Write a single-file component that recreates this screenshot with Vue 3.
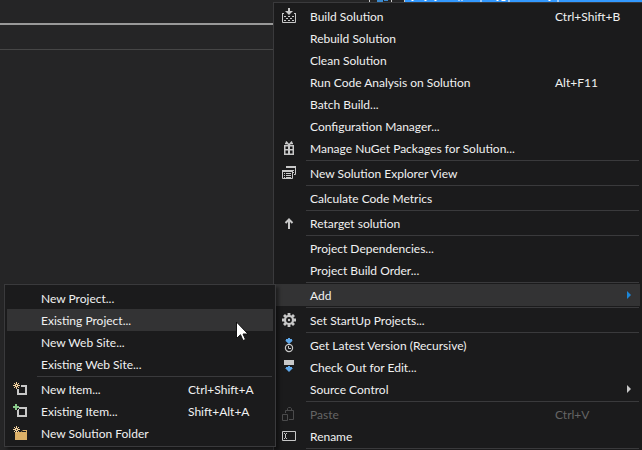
<script setup>
import { ref } from 'vue'

const hovered = ref('Existing Project...')

const groups = [
  [
    { label: 'Build Solution', icon: 'build', keys: 'Ctrl+Shift+B' },
    { label: 'Rebuild Solution' },
    { label: 'Clean Solution' },
    { label: 'Run Code Analysis on Solution', keys: 'Alt+F11' },
    { label: 'Batch Build...' },
    { label: 'Configuration Manager...' },
    { label: 'Manage NuGet Packages for Solution...', icon: 'nuget' }
  ],
  [{ label: 'New Solution Explorer View', icon: 'view' }],
  [{ label: 'Calculate Code Metrics' }],
  [{ label: 'Retarget solution', icon: 'up' }],
  [{ label: 'Project Dependencies...' }, { label: 'Project Build Order...' }],
  [{ label: 'Add', arrow: true, open: true }],
  [{ label: 'Set StartUp Projects...', icon: 'gear' }],
  [
    { label: 'Get Latest Version (Recursive)', icon: 'latest' },
    { label: 'Check Out for Edit...', icon: 'checkout' },
    { label: 'Source Control', arrow: true }
  ],
  [
    { label: 'Paste', icon: 'paste', keys: 'Ctrl+V', disabled: true },
    { label: 'Rename', icon: 'rename' }
  ]
]

const addGroups = [
  [
    { label: 'New Project...' },
    { label: 'Existing Project...' },
    { label: 'New Web Site...' },
    { label: 'Existing Web Site...' }
  ],
  [
    { label: 'New Item...', icon: 'newItem', keys: 'Ctrl+Shift+A' },
    { label: 'Existing Item...', icon: 'existingItem', keys: 'Shift+Alt+A' },
    { label: 'New Solution Folder', icon: 'folder' }
  ]
]

const star = '<path d="M3.5 0v7M0 3.5h7M1 1l5 5M6 1L1 6" stroke="#f0cf9c"/><path d="M3 3h1v1H3z" fill="#1b1b1c"/>'

const icons = {
  build: '<path d="M.5 4v9.500h13V4M0 4.500h2M12 4.500h2" fill="none" stroke="#c8c8c8"/><path d="M6 -1h2v3h3L7 6 3 2h3z" fill="#c8c8c8"/><path d="M2 7h2v1H2zM10 7h2v1h-2zM6 7h2v1H6zM4 9h2v1H4zM8 9h2v1H8zM2 11h2v1H2zM6 11h2v1H6zM10 11h2v1h-2z" fill="#c8c8c8"/>',
  nuget: '<path d="M2 4h10v5H2zM2 9h10v5H2z" fill="#c8c8c8"/><path d="M3.500 5.500H6V8H3.500zM8 5.500h2.500V8H8zM3.500 9.500H6v3H3.500zM8 9.500h2.500v3H8z" fill="#1b1b1c"/><path d="M7 4L4 0.500M7 4l3-3.500M3 2.500h3M8 2.500h3" fill="none" stroke="#c8c8c8" stroke-width="1.500"/>',
  view: '<path d="M4.500 2V.5h9v8H12M.5 4.500h10v8H.5z" fill="none" stroke="#c8c8c8"/><path d="M4 0h10v2H4zM0 4h11v2H0zM2 7h1v1H2zM4 7h5v1H4zM2 9h1v1H2zM4 9h5v1H4zM2 11h1v1H2zM4 11h5v1H4zM11 4h1v1h-1zM11 6h1v1h-1z" fill="#c8c8c8"/>',
  up: '<path d="M7 13V3M3.500 7L7 3.500 10.500 7" fill="none" stroke="#c8c8c8" stroke-width="2"/>',
  gear: '<g stroke="#c8c8c8" stroke-width="2.800"><path d="M7 0v3M7 11v3M0 7h3M11 7h3M2 2l2 2M10 10l2 2M2 12l2-2M10 4l2-2"/></g><circle cx="7" cy="7" r="4" fill="none" stroke="#c8c8c8" stroke-width="2.200"/><circle cx="7" cy="7" r="1.200" fill="#c8c8c8"/>',
  latest: '<path d="M6 0h2v2.500h3L7 6 3 2.500h3z" fill="#5fa8ea"/><path d="M4 1h2v2H4zM8 1h2v2H8z" fill="#5fa8ea"/><circle cx="7" cy="10" r="3.600" fill="none" stroke="#c8c8c8" stroke-width="1.200"/><path d="M6.500 8v2.500H9" fill="none" stroke="#c8c8c8"/>',
  checkout: '<path d="M2 0h10v5H2z" fill="#c8c8c8"/><path d="M6 6h2v2h3l-4 4-4-4h3z" fill="#5fa8ea"/><path d="M4 7h2v2H4zM8 7h2v2H8z" fill="#5fa8ea"/>',
  paste: '<path d="M.5 7.500h5v6h-5zM3.500 6V3.500h8v9H7M5.500 3V1.500l1-1h2l1 1V3" fill="none" stroke="#4b4b4c"/>',
  rename: '<path d="M.5 2.500h13v9H.5z" fill="none" stroke="#c8c8c8"/><path d="M2 4.500h1M4 4.500h1M3.500 5v4M2 9.500h1M4 9.500h1" stroke="#c8c8c8"/>',
  newItem: `<path d="M8 4h5v8H5V7" fill="none" stroke="#c8c8c8" stroke-width="2"/>${star}`,
  existingItem: '<path d="M5 4h8v8H5z" fill="none" stroke="#c8c8c8" stroke-width="2"/><path d="M3 0v6M0 3h6" stroke="#1b1b1c" stroke-width="4"/><path d="M3 0v6M0 3h6" stroke="#89c98b" stroke-width="2"/>',
  folder: `<path d="M2 6h6l2-2h4v10H2z" fill="#dcb067"/><path d="M9 5.500h4" stroke="#1b1b1c"/>${star}`
}
</script>

<template>
  <div class="desktop">
    <div class="panel">
      <div class="panel-title"></div>
      <div class="panel-row"></div>
    </div>
    <div class="tree-row">
      <svg class="tree-icon" viewBox="0 0 36 2">
        <path d="M0 0h1v2H0zM22 0h1v2h-1zM35 0h1v2h-1z" fill="#c8c8c8" />
        <path d="M8 0h6v2H8zM15 0h4v1h-4z" fill="#3a8ad0" />
      </svg>
      <svg class="tree-text" viewBox="0 0 236 2">
        <path d="M6 0h2v1H6zM19 0h2v1h-2zM29 0h2v1h-2zM53 0h1v1h-1zM56 0h1v1h-1zM75 0h1v2h-1zM91 0h2v1h-2zM96 0h4v1h-4zM103 0h1v2h-1zM143 0h2v1h-2zM152 0h1v2h-1z" fill="#fff" />
      </svg>
    </div>

    <div class="menu main-menu" role="menu">
      <div v-for="(group, g) in groups" :key="g" class="group">
        <div v-for="item in group" :key="item.label" class="entry">
          <button type="button" role="menuitem" class="item" :class="{ active: item.open }" :disabled="item.disabled">
            <svg class="icon" viewBox="0 0 16 16" v-html="icons[item.icon]"></svg>
            <span class="label">{{ item.label }}</span>
            <span v-if="item.keys" class="keys">{{ item.keys }}</span>
            <span v-if="item.arrow" class="arrow"></span>
          </button>

          <div v-if="item.open" class="menu sub-menu" role="menu">
            <div v-for="(subGroup, s) in addGroups" :key="s" class="group">
              <button
                v-for="sub in subGroup"
                :key="sub.label"
                type="button"
                role="menuitem"
                class="item"
                :class="{ active: hovered === sub.label }"
                @mouseenter="hovered = sub.label"
              >
                <svg class="icon" viewBox="0 0 16 16" v-html="icons[sub.icon]"></svg>
                <span class="label">{{ sub.label }}</span>
                <span v-if="sub.keys" class="keys">{{ sub.keys }}</span>
              </button>
            </div>
            <svg class="cursor" viewBox="0 0 12 20">
              <path d="M.5 1v16.500l4-3.800 2.500 5.800 2.500-1-2.500-5.500h5z" fill="#fff" stroke="#111" />
            </svg>
          </div>
        </div>
      </div>
    </div>
  </div>
</template>

<style>
body {
  margin: 0;
  background: #252526;
}
</style>

<style scoped>
.desktop {
  position: relative;
  height: 100vh;
  overflow: hidden;
  background: #252526;
  font-family: Lato, "Open Sans", sans-serif;
  font-size: 12px;
}

.panel-title {
  height: 23px;
  border-bottom: 2px solid #999;
}

.panel-row {
  height: 24px;
  border-bottom: 1px solid #464646;
}

.tree-row {
  position: absolute;
  top: 0;
  left: 369px;
  right: 0;
  display: flex;
  height: 2px;
}

.tree-icon {
  flex: none;
  width: 36px;
  height: 2px;
}

.tree-text {
  flex: 1;
  height: 2px;
  background: #3399ff;
}

.menu {
  position: absolute;
  box-sizing: border-box;
  padding: 2px;
  border: 1px solid #3a3a3c;
  background: #1b1b1c;
}

.main-menu {
  top: 2px;
  left: 273px;
  right: 0;
  border-right: 0;
}

.sub-menu {
  top: 0;
  right: 100%;
  width: 272px;
  box-shadow: 3px 3px 3px rgba(0, 0, 0, 0.4);
}

.group + .group::before,
.main-menu > .group:last-child::after {
  content: "";
  display: block;
  height: 1px;
  margin: 1px 1px 1px 30px;
  background: #3a3a3c;
}

.entry {
  position: relative;
}

.item {
  display: flex;
  align-items: center;
  width: 100%;
  height: 22px;
  padding: 0 0 0 6px;
  border: 0;
  background: transparent;
  color: #f1f1f1;
  font: inherit;
  line-height: 14px;
  text-align: left;
  white-space: nowrap;
}

.item.active {
  background: #333334;
}

.item:disabled {
  color: #656565;
}

.icon {
  flex: none;
  width: 16px;
  height: 16px;
  margin: 2px 12px 0 0;
  overflow: visible;
}

.label {
  flex: 1;
  padding-top: 2px;
}

.keys {
  width: 85px;
  padding-top: 2px;
}

.arrow {
  margin-right: 9px;
  border: 4px solid transparent;
  border-right: 0;
  border-left-color: #c8c8c8;
}

.active .arrow {
  border-left-color: #1c86d8;
}

.cursor {
  position: absolute;
  top: 36px;
  left: 231px;
  width: 12px;
  height: 20px;
}
</style>
